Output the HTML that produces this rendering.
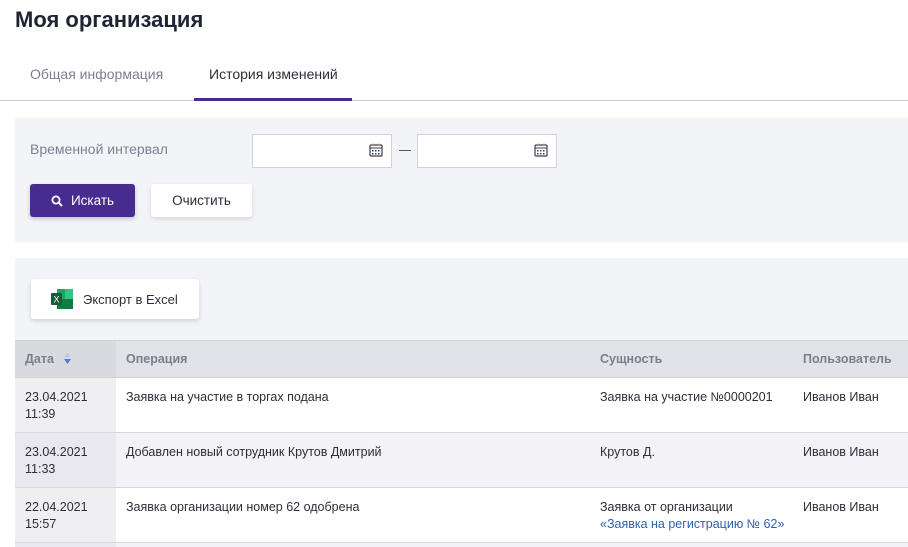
<!DOCTYPE html>
<html><head><meta charset="utf-8"><style>
body{margin:0;width:908px;height:547px;overflow:hidden;background:#fff;font-family:"Liberation Sans",sans-serif;color:#2b2f3a;position:relative}
.a{position:absolute}
h1{position:absolute;left:15px;top:7px;margin:0;font-size:22px;font-weight:bold;color:#1f2433}
.t{font-size:14px;color:#7d8090}
.panel{background:#f3f4f8}
.inp{background:#fff;border:1px solid #cfd1dc;box-sizing:border-box;width:140px;height:34px}
.btn{box-sizing:border-box;border-radius:3px;font-size:13.5px;display:flex;align-items:center;justify-content:center}
.cell{font-size:12.5px;line-height:17px;color:#2b2f3a}
.hd{font-size:12.5px;font-weight:bold;color:#7b7e8c}
</style></head><body>
<h1>Моя организация</h1>
<div class="a t" style="left:30px;top:66px">Общая информация</div>
<div class="a t" style="left:209px;top:66px;color:#2b2f3a">История изменений</div>
<div class="a" style="left:0;top:100px;width:908px;height:1px;background:#c9cad6"></div>
<div class="a" style="left:194px;top:98px;width:158px;height:3px;background:#472b8f"></div>

<div class="a panel" style="left:15px;top:118px;width:893px;height:124px"></div>
<div class="a t" style="left:30px;top:141px">Временной интервал</div>
<div class="a inp" style="left:252px;top:134px"></div>
<div class="a inp" style="left:417px;top:134px"></div>
<svg class="a" style="left:369px;top:143px" width="14" height="14" viewBox="0 0 14 14"><rect x="1" y="2" width="12" height="11" rx="1" fill="none" stroke="#3a3f55" stroke-width="1.2"/><line x1="1" y1="5" x2="13" y2="5" stroke="#3a3f55"/><line x1="4" y1="0.5" x2="4" y2="3" stroke="#e08a3a"/><line x1="10" y1="0.5" x2="10" y2="3" stroke="#e08a3a"/><g fill="#3a3f55"><rect x="3" y="7" width="1.5" height="1.5"/><rect x="6" y="7" width="1.5" height="1.5"/><rect x="9" y="7" width="1.5" height="1.5"/><rect x="3" y="10" width="1.5" height="1.5"/><rect x="6" y="10" width="1.5" height="1.5"/><rect x="9" y="10" width="1.5" height="1.5"/></g></svg>
<svg class="a" style="left:534px;top:143px" width="14" height="14" viewBox="0 0 14 14"><rect x="1" y="2" width="12" height="11" rx="1" fill="none" stroke="#3a3f55" stroke-width="1.2"/><line x1="1" y1="5" x2="13" y2="5" stroke="#3a3f55"/><line x1="4" y1="0.5" x2="4" y2="3" stroke="#e08a3a"/><line x1="10" y1="0.5" x2="10" y2="3" stroke="#e08a3a"/><g fill="#3a3f55"><rect x="3" y="7" width="1.5" height="1.5"/><rect x="6" y="7" width="1.5" height="1.5"/><rect x="9" y="7" width="1.5" height="1.5"/><rect x="3" y="10" width="1.5" height="1.5"/><rect x="6" y="10" width="1.5" height="1.5"/><rect x="9" y="10" width="1.5" height="1.5"/></g></svg>
<div class="a" style="left:399px;top:150px;width:12px;height:1px;background:#555"></div>
<div class="a btn" style="left:30px;top:184px;width:105px;height:33px;background:#472b8f;color:#fff;box-shadow:0 2px 5px rgba(0,0,0,.2)"><svg width="12" height="12" viewBox="0 0 12 12" style="margin-right:8px"><circle cx="5" cy="5" r="3.6" fill="none" stroke="#fff" stroke-width="1.8"/><line x1="7.6" y1="7.6" x2="11" y2="11" stroke="#fff" stroke-width="2"/></svg>Искать</div>
<div class="a btn" style="left:151px;top:184px;width:101px;height:33px;background:#fff;box-shadow:0 2px 5px rgba(0,0,0,.12)">Очистить</div>

<div class="a panel" style="left:15px;top:258px;width:893px;height:82px"></div>
<div class="a btn" style="left:31px;top:279px;width:168px;height:40px;background:#fff;box-shadow:0 2px 5px rgba(0,0,0,.15);justify-content:flex-start;padding-left:20px;font-size:13px"><svg width="22" height="20" viewBox="0 0 22 20" style="margin-right:10px"><rect x="6" y="0" width="16" height="20" rx="1" fill="#21a366"/><rect x="14" y="0" width="8" height="10" fill="#33c481"/><rect x="6" y="10" width="16" height="10" fill="#107c41"/><rect x="0" y="4" width="11" height="12" rx="1" fill="#185c37"/><text x="2.5" y="13.5" font-size="9" fill="#fff" font-family="Liberation Sans">X</text></svg>Экспорт в Excel</div>

<div class="a" style="left:15px;top:340px;width:893px;height:38px;background:#e2e3e8;border-top:1px solid #cfd0d8;border-bottom:1px solid #cfd0d8;box-sizing:border-box"></div>
<div class="a" style="left:15px;top:341px;width:101px;height:36px;background:#d9dae0"></div>
<div class="a hd" style="left:25px;top:352px">Дата</div>
<svg class="a" style="left:64px;top:353px" width="7" height="11"><path d="M3.5 0L7 4H0Z" fill="#b9c4e8"/><path d="M3.5 11L7 6H0Z" fill="#4a7fe0"/></svg>
<div class="a hd" style="left:126px;top:352px">Операция</div>
<div class="a hd" style="left:600px;top:352px">Сущность</div>
<div class="a hd" style="left:803px;top:352px">Пользователь</div>

<div class="a" style="left:15px;top:378px;width:893px;height:55px;background:#fff;border-bottom:1px solid #d6d7de;box-sizing:border-box"></div>
<div class="a" style="left:15px;top:433px;width:893px;height:55px;background:#f3f2f7;border-bottom:1px solid #d6d7de;box-sizing:border-box"></div>
<div class="a" style="left:15px;top:488px;width:893px;height:55px;background:#fff;border-bottom:1px solid #d6d7de;box-sizing:border-box"></div>
<div class="a" style="left:15px;top:543px;width:893px;height:4px;background:#f3f2f7"></div>
<div class="a" style="left:15px;top:378px;width:101px;height:54px;background:#efeff2"></div>
<div class="a" style="left:15px;top:433px;width:101px;height:54px;background:#e9e8ee"></div>
<div class="a" style="left:15px;top:488px;width:101px;height:54px;background:#efeff2"></div>
<div class="a" style="left:15px;top:543px;width:101px;height:4px;background:#e9e8ee"></div>

<div class="a cell" style="left:25px;top:389px">23.04.2021<br>11:39</div>
<div class="a cell" style="left:126px;top:389px">Заявка на участие в торгах подана</div>
<div class="a cell" style="left:600px;top:389px">Заявка на участие №0000201</div>
<div class="a cell" style="left:803px;top:389px">Иванов Иван</div>
<div class="a cell" style="left:25px;top:444px">23.04.2021<br>11:33</div>
<div class="a cell" style="left:126px;top:444px">Добавлен новый сотрудник Крутов Дмитрий</div>
<div class="a cell" style="left:600px;top:444px">Крутов Д.</div>
<div class="a cell" style="left:803px;top:444px">Иванов Иван</div>
<div class="a cell" style="left:25px;top:499px">22.04.2021<br>15:57</div>
<div class="a cell" style="left:126px;top:499px">Заявка организации номер 62 одобрена</div>
<div class="a cell" style="left:600px;top:499px">Заявка от организации<br><span style="color:#2f5fb0">«Заявка на регистрацию № 62»</span></div>
<div class="a cell" style="left:803px;top:499px">Иванов Иван</div>
</body></html>
